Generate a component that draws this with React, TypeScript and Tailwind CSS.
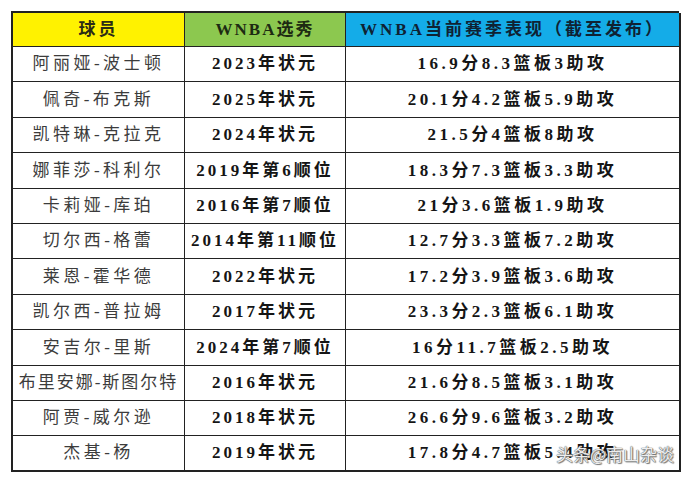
import React from "react";

type Row = { name: string; draft: string; stats: string };

const rows: Row[] = [
  { name: "阿丽娅-波士顿", draft: "2023年状元", stats: "16.9分8.3篮板3助攻" },
  { name: "佩奇-布克斯", draft: "2025年状元", stats: "20.1分4.2篮板5.9助攻" },
  { name: "凯特琳-克拉克", draft: "2024年状元", stats: "21.5分4篮板8助攻" },
  { name: "娜菲莎-科利尔", draft: "2019年第6顺位", stats: "18.3分7.3篮板3.3助攻" },
  { name: "卡莉娅-库珀", draft: "2016年第7顺位", stats: "21分3.6篮板1.9助攻" },
  { name: "切尔西-格蕾", draft: "2014年第11顺位", stats: "12.7分3.3篮板7.2助攻" },
  { name: "莱恩-霍华德", draft: "2022年状元", stats: "17.2分3.9篮板3.6助攻" },
  { name: "凯尔西-普拉姆", draft: "2017年状元", stats: "23.3分2.3篮板6.1助攻" },
  { name: "安吉尔-里斯", draft: "2024年第7顺位", stats: "16分11.7篮板2.5助攻" },
  { name: "布里安娜-斯图尔特", draft: "2016年状元", stats: "21.6分8.5篮板3.1助攻" },
  { name: "阿贾-威尔逊", draft: "2018年状元", stats: "26.6分9.6篮板3.2助攻" },
  { name: "杰基-杨", draft: "2019年状元", stats: "17.8分4.7篮板5.4助攻" },
];

const font = "font-['Liberation_Serif','Noto_Sans_CJK_SC',serif]";

export default function App() {
  return (
    <div className="relative h-[481px] w-[690px] overflow-hidden bg-white pl-[11px] pt-[11px]">
      <div className="grid w-[668px] grid-cols-[172px_161px_335px] border-l-2 border-t-2 border-[#222]">
        <div className={`flex h-[34px] items-center justify-center border-b border-r border-[#222] bg-[#fff200] text-[17px] font-bold tracking-[3px] text-[#2b2b16] ${font}`}>
          球员
        </div>
        <div className={`flex h-[34px] items-center justify-center border-b border-r border-[#222] bg-[#8cc84f] text-[17px] font-bold tracking-[2px] text-[#1d2a12] ${font}`}>
          WNBA选秀
        </div>
        <div className={`flex h-[34px] items-center justify-center border-b border-r-2 border-[#222] bg-[#14ace8] text-[17px] font-bold tracking-[3px] text-[#0f2233] ${font}`}>
          WNBA当前赛季表现（截至发布）
        </div>
        {rows.map((row, i) => {
          const last = i === rows.length - 1;
          const rowBorder = last ? "border-b-2" : "border-b";
          const nameTracking = row.name.length > 7 ? "tracking-[2px]" : "tracking-[3.5px]";
          return (
            <React.Fragment key={row.name}>
              <div className={`flex h-[35.4px] items-center justify-center whitespace-nowrap border-r border-[#222] ${rowBorder} ${nameTracking} text-[17px] text-[#3c3c3c] ${font}`}>
                {row.name}
              </div>
              <div className={`flex h-[35.4px] items-center justify-center whitespace-nowrap border-r border-[#222] ${rowBorder} text-[17px] font-bold tracking-[3px] text-[#151515] ${font}`}>
                {row.draft}
              </div>
              <div className={`flex h-[35.4px] items-center justify-center whitespace-nowrap border-r-2 border-[#222] ${rowBorder} text-[17px] font-bold tracking-[3.5px] text-[#151515] ${font}`}>
                {row.stats}
              </div>
            </React.Fragment>
          );
        })}
      </div>
      <div className="absolute left-[556px] top-[445px] whitespace-nowrap font-['Noto_Sans_CJK_SC',sans-serif] text-[17px] leading-none text-white/90 [text-shadow:0_0_1px_#555,0_0_1px_#555,1px_1px_1px_#777]">
        头条@南山杂谈
      </div>
    </div>
  );
}
